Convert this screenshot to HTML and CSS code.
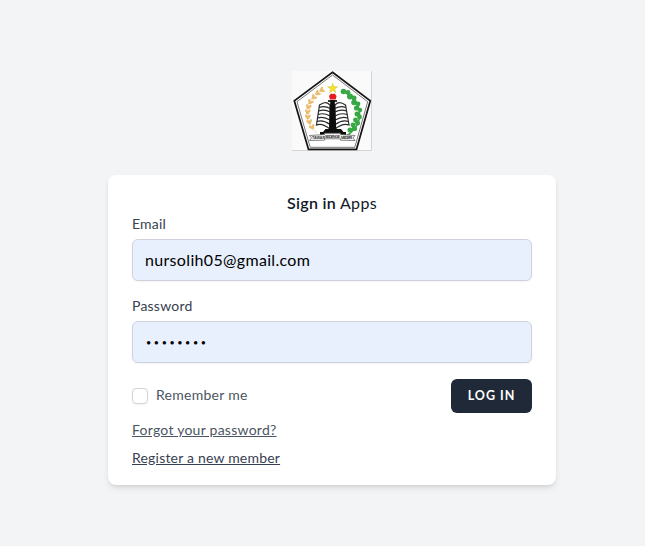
FILE: index.html
```html
<!DOCTYPE html>
<html lang="en">
<head>
<meta charset="utf-8">
<title>Sign in</title>
<link rel="stylesheet" href="styles.css">
</head>
<body>
<main class="page">
  <svg class="logo" viewBox="0 0 80 80" role="img" aria-label="Logo">
    <defs>
      <g id="wheat"><ellipse cx="-2" cy="-1" rx="2.9" ry="1.3" transform="rotate(50)"/><ellipse cx="2" cy="-1" rx="2.9" ry="1.3" transform="rotate(-40)"/></g>
    </defs>
    <rect width="80" height="80" fill="#fafafa"/>
    <path d="M0 79.5H79.5V0" fill="none" stroke="#d2d4d6"/>
    <path d="M40.5 1.3L78.3 29.8L64.5 78.3H16.5L2.3 29.8Z" fill="#fff" stroke="#151515" stroke-width="1.7"/>
    <path d="M40.5 4L75.7 30.7L62.8 76.3H18.2L5 30.7Z" fill="#fff" stroke="#555" stroke-width=".8"/>
    <path d="M30 19C12 28 9 49 25 62" fill="none" stroke="#f0d49c"/>
    <g fill="#ebbd70">
      <use href="#wheat" transform="translate(28 20) rotate(55)"/>
      <use href="#wheat" transform="translate(24 23.5) rotate(45)"/>
      <use href="#wheat" transform="translate(20.5 28) rotate(35)"/>
      <use href="#wheat" transform="translate(17.5 33) rotate(20)"/>
      <use href="#wheat" transform="translate(16 38) rotate(8)"/>
      <use href="#wheat" transform="translate(15.5 43)"/>
      <use href="#wheat" transform="translate(16 48) rotate(-8)"/>
      <use href="#wheat" transform="translate(18 53) rotate(-20)"/>
      <use href="#wheat" transform="translate(21 58) rotate(-30)"/>
    </g>
    <path d="M51 20C70 29 74 50 56 64L52 67" fill="none" stroke="#3da648" stroke-width="1.6"/>
    <g fill="#36a844">
      <circle cx="51.5" cy="20.5" r="2.8"/><circle cx="56" cy="21.5" r="2.4"/>
      <circle cx="58" cy="25.5" r="3"/><circle cx="62" cy="27" r="2.5"/>
      <circle cx="62" cy="31.5" r="2.8"/><circle cx="66" cy="33" r="2.4"/>
      <circle cx="64.5" cy="37" r="2.6"/><circle cx="68" cy="39" r="2.2"/>
      <circle cx="65" cy="43" r="2.5"/><circle cx="67.5" cy="46" r="2.4"/>
      <circle cx="63.5" cy="49" r="2.4"/><circle cx="65.5" cy="52" r="2.5"/>
      <circle cx="61" cy="54" r="2.4"/><circle cx="62.5" cy="57.5" r="2.6"/>
      <circle cx="58" cy="59" r="2.5"/>
    </g>
    <path d="M40.7 12.3l1.2 3.5h3.8l-3 2.2 1.1 3.7-3.1-2.2-3.1 2.2 1.1-3.7-3-2.2h3.8z" fill="#f7e51e" stroke="#bcae35" stroke-width=".4"/>
    <g fill="#fff" stroke="#292929" stroke-width="1.2">
      <path d="M38 34C34 30 31 32 27.5 34L24.5 54C29 52 33 54 38 58Z"/>
      <path d="M43 34C47 30 50 32 53.5 34L57 54C52 52 48 54 43 58Z"/>
      <path d="M27.3 36.500q5-2 11 1M26.700 40q6-2 11.500 1M26 43.500q6-2 12 1.500M25.500 47q6-2 12.500 2M25 50.500q6-2 13 3M53.700 36.500q-5-2-11 1M54.500 40q-6-2-11.500 1M55 43.500q-6-2-12 1.500M55.700 47q-6-2-12.500 2M56.300 50.500q-6-2-13 3" fill="none"/>
    </g>
    <path d="M38.300 29h4.400l1.600 29h4.700l2.500 3h2.500v3H28v-3h3l2.500-3h3.500z" fill="#0d0d0d"/>
    <path d="M36 30h9" stroke="#111" stroke-width="1.700"/>
    <path d="M38 28.500l-1-3.500 2-2.600 1.800.6 1.800-.6 2 2.600-1 3.500z" fill="#e51c20"/>
    <path d="M17.500 64.500l15-1v-1.300h16v1.300l14.500 1-2 2.500 2 2.500-14.500-.3v-1.400h-16v1.400l-15 .3 2-2.500z" fill="#f5f5f5" stroke="#555" stroke-width=".7"/>
    <g class="motto"><text x="20" y="68.400">TAWAR</text><text x="33" y="66.600" textLength="15">SEDENGE</text><text x="49" y="68.400" textLength="11">MEDERI</text></g>
  </svg>

  <form class="card">
    <h1 class="title"><b>Sign in</b> <span>Apps</span></h1>
    <label class="label email-label" for="email">Email</label>
    <input class="field" id="email" type="text" value="nursolih05@gmail.com">
    <label class="label password-label" for="password">Password</label>
    <input class="field password" id="password" type="password" value="password">
    <div class="actions">
      <label class="remember"><span class="checkbox"></span><span class="remember-text">Remember me</span></label>
      <button class="login" type="button">LOG IN</button>
    </div>
    <div class="links">
      <a class="forgot" href="#">Forgot your password?</a>
      <a class="register" href="#">Register a new member</a>
    </div>
  </form>
</main>
</body>
</html>
```
FILE: styles.css
```css
* { box-sizing: border-box; }
body { margin: 0; background: #f3f4f6; font-family: Lato, "Liberation Sans", sans-serif; color: #111827; }
.page { min-height: 546px; padding: 71px 0 0 19px; display: flex; flex-direction: column; align-items: center; }
.logo { width: 80px; height: 80px; display: block; flex-shrink: 0; }
.motto { font: bold 3.7px "Liberation Sans", sans-serif; fill: #333; }
.card { width: 448px; height: 310px; margin-top: 24px; padding: 16px 24px; background: #fff; border-radius: 8px; box-shadow: 0 4px 6px -1px rgb(0 0 0 / .1), 0 2px 4px -2px rgb(0 0 0 / .1); }
.title { margin: 0; font-size: 16px; line-height: 23px; font-weight: 400; text-align: center; letter-spacing: .3px; }
.title b { font-weight: 600; }
.label { display: block; font-size: 14px; line-height: 20px; color: #374151; letter-spacing: .22px; }
.email-label { margin-bottom: 5px; }
.password-label { margin: 15px 0 5px; }
.field { display: block; width: 400px; height: 42px; padding: 7px 12px 9px; border: 1px solid #cdd2dc; border-radius: 6px; background: #e8f0fe; color: #000; font: 16px/24px Lato, sans-serif; letter-spacing: .33px; box-shadow: 0 1px 2px rgb(0 0 0 / .05); outline: 0; }
.password { padding: 8px 13px; font-size: 9px; letter-spacing: 2.6px; }
.actions { display: flex; justify-content: space-between; margin-top: 16px; height: 34px; align-items: center; }
.remember { display: flex; align-items: center; gap: 8px; font-size: 14px; line-height: 20px; color: #4b5563; letter-spacing: .27px; }
.remember-text { padding-bottom: 2px; }
.checkbox { width: 16px; height: 16px; border: 1px solid #d1d5db; border-radius: 4px; background: #fff; box-shadow: 0 1px 2px rgb(0 0 0 / .05); }
.login { width: 81px; height: 34px; padding: 0; border: 0; border-radius: 6px; background: #1f2937; color: #fff; font: 700 12.5px/16px Lato, sans-serif; letter-spacing: 1px; text-align: center; }
.links { display: flex; flex-direction: column; align-items: flex-start; gap: 8px; margin-top: 7px; }
.links a { font-size: 14px; line-height: 20px; color: #4b5563; letter-spacing: .25px; text-decoration: underline; }
.links .register { color: #374151; letter-spacing: .2px; }
```
